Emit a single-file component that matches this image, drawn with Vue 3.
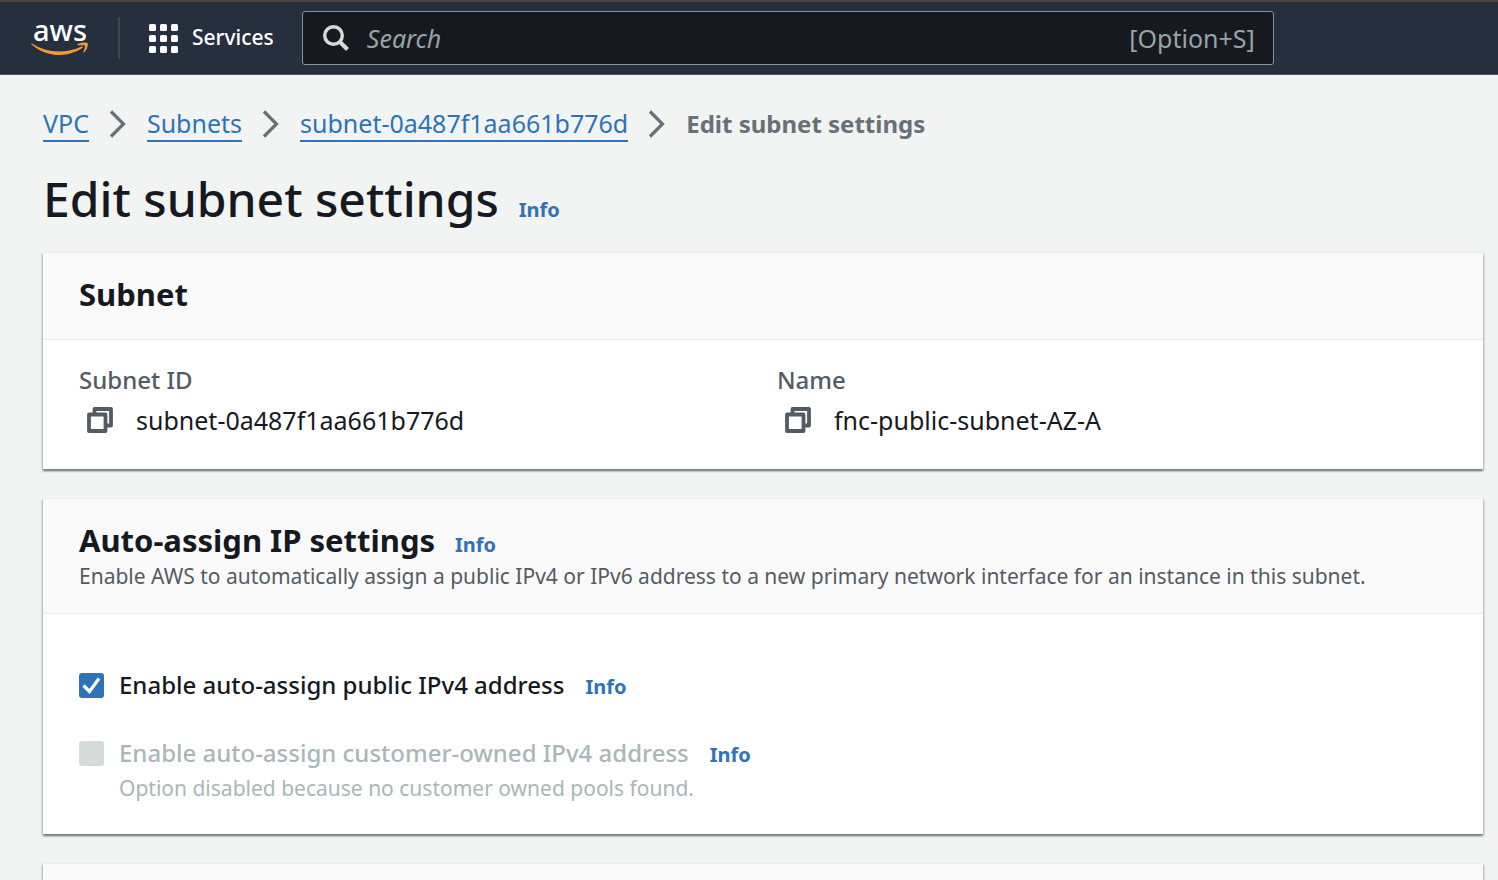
<script setup>
import { ref } from 'vue'

const query = ref('')
const publicIpv4 = ref(true)
const customerIpv4 = ref(false)

const crumbs = ['VPC', 'Subnets', 'subnet-0a487f1aa661b776d']
const details = [
  { label: 'Subnet ID', value: 'subnet-0a487f1aa661b776d' },
  { label: 'Name', value: 'fnc-public-subnet-AZ-A' },
]
const cells = [0, 11, 22]
</script>

<template>
  <div class="page">
    <header class="topbar">
      <a class="logo" href="#" aria-label="AWS home">
        <span class="logo-text">aws</span>
        <svg class="smile" width="58" height="14" viewBox="0 0 58 14" aria-hidden="true">
          <path d="M1 1.500C9 6.800 18 9.500 28 9.500c7.500 0 16-1.800 22.500-5 1.200-.5 2 .7.800 1.600C45 10.500 36.500 13 28.500 13 18 13 8 9 .6 2.400 0 1.700.3 1.100 1 1.500z" fill="#f09c38" />
          <path d="M46.500 2.200c2.600-1.700 9.300-2.200 10.200-.9.800 1.200-.5 6.500-3.600 9.200-.6.400-1 .1-.8-.5.8-2 2.200-5.400 1.600-6.200-.7-.9-4.600-.7-7-.5-.7.100-.9-.6-.4-1.100z" fill="#f09c38" />
        </svg>
      </a>
      <button class="services" type="button">
        <svg width="29" height="29" viewBox="0 0 29 29" fill="#fff" aria-hidden="true">
          <template v-for="y in cells" :key="y">
            <rect v-for="x in cells" :key="x" :x="x" :y="y" width="7" height="7" rx="1.500" />
          </template>
        </svg>
        <span>Services</span>
      </button>
      <label class="search">
        <svg width="26" height="26" viewBox="0 0 26 26" fill="none" stroke="#d5dbdb" aria-hidden="true">
          <circle cx="10.500" cy="10.500" r="8.800" stroke-width="3.400" />
          <path d="M16.500 16.500l8 8" stroke-width="4" />
        </svg>
        <input v-model="query" type="search" placeholder="Search" aria-label="Search" />
        <span class="shortcut">[Option+S]</span>
      </label>
    </header>

    <main class="content">
      <nav class="crumbs" aria-label="Breadcrumbs">
        <template v-for="crumb in crumbs" :key="crumb">
          <a href="#">{{ crumb }}</a>
          <svg width="18" height="28" viewBox="0 0 18 28" fill="none" stroke="#687078" stroke-width="3.200" aria-hidden="true">
            <path d="M2 1.500l12.500 12.500L2 26.500" />
          </svg>
        </template>
        <span class="current" aria-current="page">Edit subnet settings</span>
      </nav>

      <div class="title">
        <h1>Edit subnet settings</h1>
        <a class="info" href="#">Info</a>
      </div>

      <section class="card">
        <div class="card-head">
          <h2>Subnet</h2>
        </div>
        <dl class="details">
          <div v-for="item in details" :key="item.label">
            <dt>{{ item.label }}</dt>
            <dd>
              <button class="copy" type="button" :aria-label="'Copy ' + item.label">
                <svg width="26" height="26" viewBox="0 0 26 26" fill="none" stroke="#545b64" stroke-width="3.800" stroke-linejoin="round" aria-hidden="true">
                  <path d="M7.500 6.500V2H24v16.500h-4" />
                  <path d="M2 7.500h16.500V24H2z" />
                </svg>
              </button>
              <span>{{ item.value }}</span>
            </dd>
          </div>
        </dl>
      </section>

      <section class="card">
        <div class="card-head">
          <div class="heading">
            <h2>Auto-assign IP settings</h2>
            <a class="info" href="#">Info</a>
          </div>
          <p>Enable AWS to automatically assign a public IPv4 or IPv6 address to a new primary network interface for an instance in this subnet.</p>
        </div>
        <div class="options">
          <div class="option">
            <span class="box">
              <input id="public-ipv4" v-model="publicIpv4" type="checkbox" />
              <svg v-if="publicIpv4" width="25" height="25" viewBox="0 0 25 25" fill="none" stroke="#fff" stroke-width="3.200" aria-hidden="true">
                <path d="M4.500 12.500l6 6L20 5.500" />
              </svg>
            </span>
            <label for="public-ipv4">Enable auto-assign public IPv4 address</label>
            <a class="info" href="#">Info</a>
          </div>
          <div>
            <div class="option disabled">
              <span class="box">
                <input id="customer-ipv4" v-model="customerIpv4" type="checkbox" disabled aria-describedby="customer-hint" />
              </span>
              <label for="customer-ipv4">Enable auto-assign customer-owned IPv4 address</label>
              <a class="info" href="#">Info</a>
            </div>
            <p id="customer-hint" class="hint">Option disabled because no customer owned pools found.</p>
          </div>
        </div>
      </section>

      <section class="card next"></section>
    </main>
  </div>
</template>

<style>
body {
  background: #f2f3f3;
}
</style>

<style scoped>
.page {
  display: flex;
  flex-direction: column;
  height: 100vh;
  overflow: hidden;
  box-sizing: border-box;
  background: #f2f3f3;
  color: #16191f;
  font-family: 'Noto Sans', 'Open Sans', sans-serif;
  font-size: 25px;
  line-height: 40px;
}
h1, h2, p, dl, dd {
  margin: 0;
}
button {
  padding: 0;
  border: 0;
  background: none;
  font: inherit;
  color: inherit;
}
svg {
  display: block;
  flex: none;
}
a {
  color: #2e73b8;
  text-decoration: none;
}
.topbar {
  display: flex;
  align-items: center;
  flex: none;
  box-sizing: border-box;
  height: 75px;
  padding-left: 31px;
  border-top: 2px solid #4d443e;
  border-bottom: 1px solid #4c5563;
  background: #262f3e;
  color: #fff;
}
.logo {
  display: flex;
  flex-direction: column;
  align-items: center;
  box-sizing: border-box;
  width: 58px;
  padding-bottom: 2px;
  color: #fff;
}
.logo-text {
  font-size: 29px;
  font-weight: 500;
  line-height: 24px;
}
.services {
  display: flex;
  align-items: center;
  gap: 14px;
  height: 42px;
  margin-left: 29px;
  padding-left: 29px;
  border-left: 2px solid #414750;
  font-size: 21px;
  font-weight: 500;
}
.services span {
  padding-bottom: 2px;
}
.search {
  display: flex;
  align-items: center;
  box-sizing: border-box;
  width: 972px;
  height: 54px;
  margin-left: 28px;
  padding: 0 18px 0 20px;
  border: 1px solid #879596;
  border-radius: 3px;
  background: #16191f;
}
.search input {
  flex: 1;
  min-width: 0;
  margin-left: 18px;
  padding: 0;
  border: 0;
  outline: 0;
  background: none;
  color: #fff;
  font: inherit;
}
.search input::placeholder {
  color: #95a5a6;
  font-style: italic;
  opacity: 1;
}
.shortcut {
  color: #95a5a6;
}
.content {
  display: flex;
  flex-direction: column;
  flex: 1;
  padding: 29px 15px 0 43px;
}
.crumbs {
  display: flex;
  align-items: center;
  gap: 20px;
}
.crumbs a {
  border-bottom: 2px solid #2e73b8;
  line-height: 34px;
}
.current {
  color: #687078;
  font-size: 24px;
  font-weight: 700;
}
.title {
  display: flex;
  align-items: baseline;
  gap: 20px;
  margin-top: 23px;
}
h1 {
  font-size: 48px;
  font-weight: 500;
  line-height: 64px;
}
.info {
  font-size: 20px;
  font-weight: 700;
  line-height: 24px;
}
.card {
  margin-top: 29px;
  border-top: 1px solid #eaeded;
  background: #fff;
  box-shadow: 0 2px 2px rgba(0, 28, 36, 0.3), 1px 2px 2px rgba(0, 28, 36, 0.2), -1px 2px 2px rgba(0, 28, 36, 0.2);
}
.title + .card {
  margin-top: 21px;
}
.card-head {
  padding: 21px 36px 25px;
  border-bottom: 1px solid #eaeded;
  background: #fafafa;
}
h2 {
  font-size: 31px;
  font-weight: 700;
  line-height: 40px;
}
.heading {
  display: flex;
  align-items: baseline;
  gap: 20px;
}
.card-head p {
  margin-top: 4px;
  color: #545b64;
  font-size: 21px;
  line-height: 24px;
}
.details {
  display: grid;
  grid-template-columns: 1fr 1fr;
  gap: 28px;
  padding: 20px 36px 29px;
}
dt {
  color: #545b64;
  font-size: 24px;
  font-weight: 500;
}
dd {
  display: flex;
  align-items: center;
  gap: 23px;
  padding-left: 8px;
}
.options {
  display: flex;
  flex-direction: column;
  gap: 28px;
  padding: 51px 36px 31px;
}
.option {
  display: flex;
  align-items: baseline;
  font-size: 24px;
  font-weight: 500;
}
.option .info {
  margin-left: 21px;
}
.box {
  display: grid;
  align-self: center;
  width: 25px;
  height: 25px;
  margin-right: 15px;
}
.box input,
.box svg {
  grid-area: 1 / 1;
}
.box svg {
  pointer-events: none;
}
.box input {
  width: 25px;
  height: 25px;
  margin: 0;
  border-radius: 3px;
  background: #d5dbdb;
  appearance: none;
}
.box input:checked {
  background: #2e73b8;
}
.disabled label,
.hint {
  color: #aab7b8;
}
.hint {
  padding-left: 40px;
  font-size: 21px;
  line-height: 30px;
}
.next {
  flex: 1;
  background: #fafafa;
}
</style>
